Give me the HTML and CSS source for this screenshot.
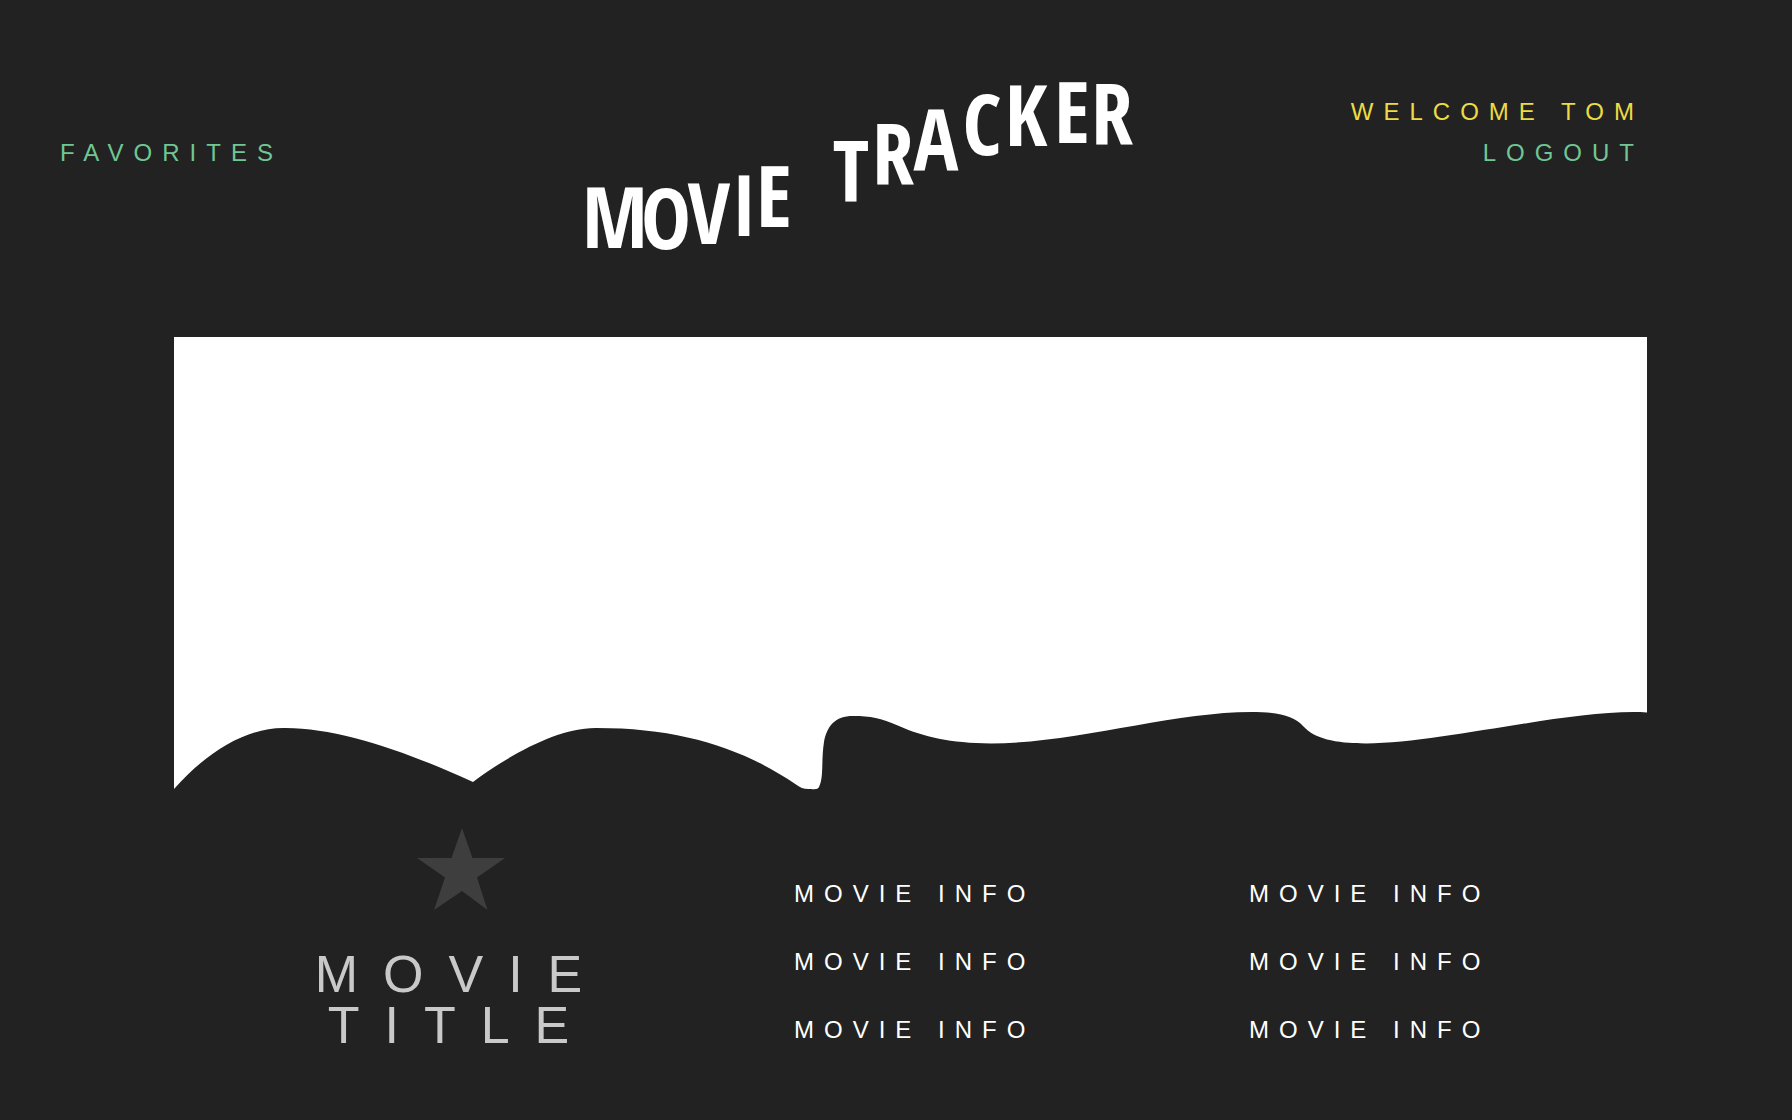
FILE: index.html
```html
<!DOCTYPE html>
<html lang="en">
<head>
<meta charset="utf-8">
<title>Movie Tracker</title>
<link rel="stylesheet" href="styles.css">
</head>
<body>
<header class="header">
  <nav class="header-nav">
    <a class="link" href="#favorites">FAVORITES</a>
  </nav>
  <h1 class="logo">
    <svg class="logo-art" viewBox="0 0 547 183" role="img" aria-label="Movie Tracker">
      <text class="logo-text" x="29 80 123 158 188" y="173 174 169 161 152">MOVIE</text>
      <text class="logo-text" x="265 307 350 396 440 486 526" y="127 110 95 80 71 68 70">TRACKER</text>
    </svg>
  </h1>
  <div class="account">
    <p class="welcome">WELCOME TOM</p>
    <button class="link" type="button">LOGOUT</button>
  </div>
</header>
<main class="main">
  <svg class="poster" viewBox="0 0 1473 453" aria-hidden="true">
    <path fill="#fff" d="M0 0H1473V375.500C1400 371 1270 406 1192 406.500C1160 406 1141 402 1129 389C1120 379 1104 375 1077 375C999 375 899 406.500 817 406.500C776 406 750 400 725 389C706 381 697 379 679 379C661 379 653 389 650 405C647 424 650 440 645 450C644 452 642 452.500 637 452C630 452.500 627 451 622 447.500C570 412 508 391 423 391C383 390 331 421 299 445C232 414 161 390 109 391C69 391 29 419 0 452Z"/>
  </svg>
  <section class="details">
    <div class="heading">
      <button class="favorite" type="button" aria-label="Add to favorites">
        <svg class="star" viewBox="0 0 88 82" aria-hidden="true">
          <path fill="#3e3e3e" d="M45 0L55.500 30H88L60 49.500L70.500 82L45 63L17 82L28 49.500L0 30H34.500Z"/>
        </svg>
      </button>
      <h2 class="title">MOVIE TITLE</h2>
    </div>
    <ul class="info">
      <li>MOVIE INFO</li>
      <li>MOVIE INFO</li>
      <li>MOVIE INFO</li>
    </ul>
    <ul class="info">
      <li>MOVIE INFO</li>
      <li>MOVIE INFO</li>
      <li>MOVIE INFO</li>
    </ul>
  </section>
</main>
</body>
</html>
```
FILE: styles.css
```css
* {
  box-sizing: border-box;
}

body {
  margin: 0;
  background: #222;
  color: #fff;
  font-family: "Liberation Sans", Helvetica, Arial, sans-serif;
  font-size: 24px;
  line-height: 41px;
  letter-spacing: 10px;
}

h1, h2, p, ul {
  margin: 0;
  padding: 0;
}

.header {
  display: grid;
  grid-template-columns: 526fr 547fr 511fr;
  align-items: start;
  padding: 75px 148px 79px 60px;
}

.header-nav {
  padding-top: 57px;
}

.link {
  padding: 0;
  border: 0;
  background: none;
  color: #70c794;
  font: inherit;
  letter-spacing: inherit;
  text-decoration: none;
  cursor: pointer;
}

.logo {
  line-height: 0;
  letter-spacing: normal;
}

.logo-art {
  display: block;
  width: 100%;
  overflow: visible;
}

.logo-text {
  fill: #fff;
  font-family: "Open Sans Condensed", "Open Sans", sans-serif;
  font-size: 84px;
  font-weight: 700;
  text-anchor: middle;
}

.account {
  display: flex;
  flex-direction: column;
  align-items: flex-end;
  padding-top: 16px;
}

.welcome {
  color: #ecdb42;
}

.main {
  padding: 0 145px 56px 174px;
}

.poster {
  display: block;
  width: 100%;
}

.details {
  display: grid;
  grid-template-columns: 574fr 409fr 398fr;
  column-gap: 46px;
  padding-top: 38px;
}

.heading {
  display: flex;
  flex-direction: column;
  align-items: center;
  gap: 39px;
}

.favorite {
  display: block;
  padding: 0;
  border: 0;
  background: none;
  cursor: pointer;
}

.star {
  display: block;
  width: 88px;
  height: 82px;
}

.title {
  max-width: 400px;
  color: #c9c9c9;
  font-size: 52px;
  font-weight: 400;
  line-height: 51px;
  letter-spacing: 25px;
  text-align: center;
}

.info {
  display: flex;
  flex-direction: column;
  gap: 27px;
  padding-top: 45px;
  list-style: none;
}
```
